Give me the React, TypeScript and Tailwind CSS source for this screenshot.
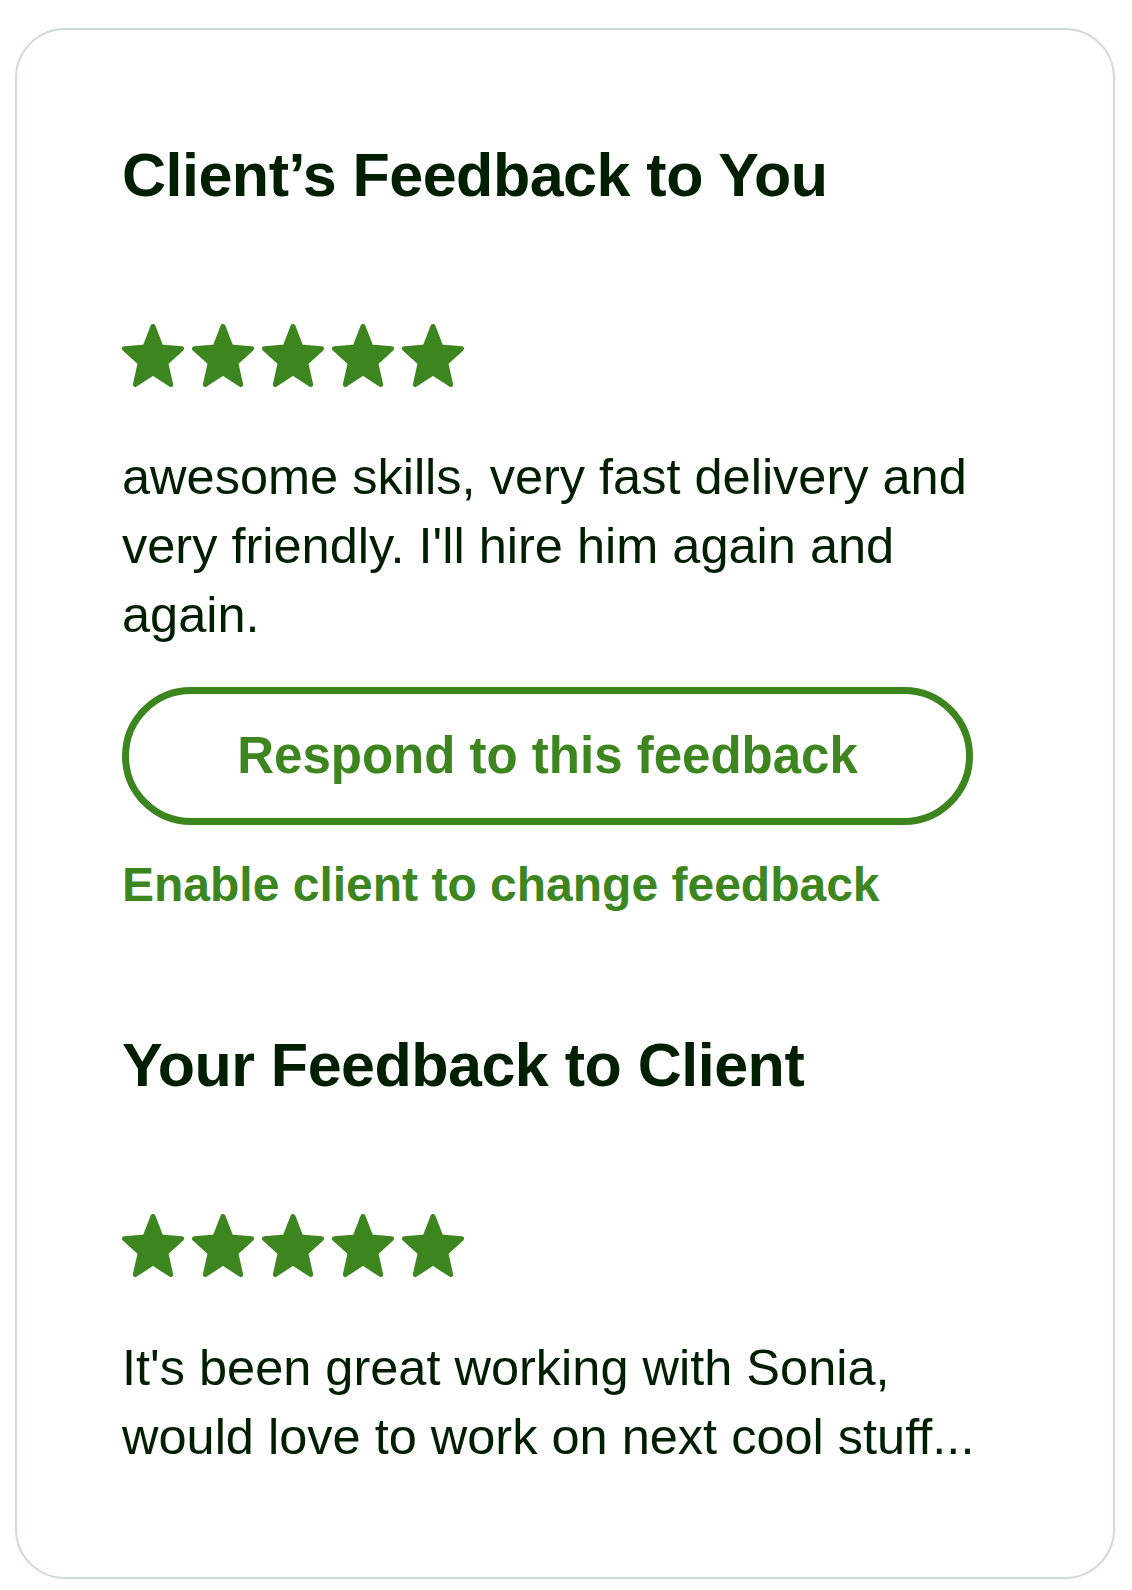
import React from 'react'

const green = 'text-[#3d861f]'

// five-point star with softened tips, sized 62x63
function Star() {
    return (
        <svg width="62" height="63" viewBox="0 0 62 63" aria-hidden="true">
            <polygon
                points="31,2.5 38.94,22.89 59.53,24.65 43.84,39.02 48.63,60.5 31,48.99 13.37,60.5 18.16,39.02 2.47,24.65 23.06,22.89"
                fill="#3d861f"
                stroke="#3d861f"
                strokeWidth="5"
                strokeLinejoin="round"
            />
        </svg>
    )
}

function Rating({ className = '' }: { className?: string }) {
    return (
        <div className={`flex gap-[8px] ${className}`}>
            {[0, 1, 2, 3, 4].map(i => (
                <Star key={i} />
            ))}
        </div>
    )
}

export default function App() {
    return (
        <div className="min-h-screen bg-white pt-[28px] pl-[15px] font-['Liberation_Sans',Arial,sans-serif]">
            <div className="w-[1100px] rounded-[50px] border-2 border-[#cfdbcf] pt-[109px] pb-[106px] pl-[105px] pr-[130px] text-[#001e00]">
                {/* feedback received */}
                <h2 className="text-[61px] leading-[73px] font-bold tracking-[-0.5px]">Client’s Feedback to You</h2>
                <Rating className="mt-[112px]" />
                <p className="mt-[55px] text-[50.5px] leading-[69px]">
                    awesome skills, very fast delivery and very friendly. I'll hire him again and again.
                </p>
                <button
                    type="button"
                    className={`mt-[38px] flex h-[138px] w-[851px] items-center justify-center rounded-full border-[7px] border-[#3d861f] bg-white text-[51px] font-bold ${green}`}
                >
                    Respond to this feedback
                </button>
                <div className={`mt-[31px] text-[48px] leading-[58px] font-bold ${green}`}>Enable client to change feedback</div>

                {/* feedback given */}
                <h2 className="mt-[115px] text-[61px] leading-[73px] font-bold tracking-[-0.5px]">Your Feedback to Client</h2>
                <Rating className="mt-[112px]" />
                <p className="mt-[56px] text-[50.5px] leading-[69px]">
                    It's been great working with Sonia, would love to work on next cool stuff...
                </p>
            </div>
        </div>
    )
}
